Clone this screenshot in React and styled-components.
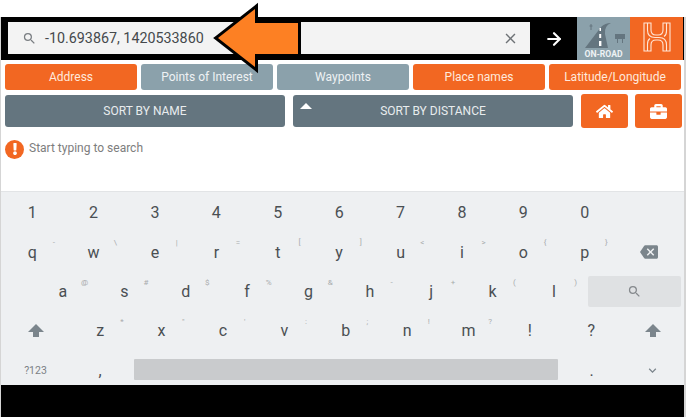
import React from "react";
import styled, { createGlobalStyle } from "styled-components";
import { MdSearch, MdClose, MdBackspace, MdKeyboardArrowDown } from "react-icons/md";
import { FaHome, FaBriefcase, FaExclamation } from "react-icons/fa";
import { ArrowRight } from "lucide-react";

const GlobalStyle = createGlobalStyle`
  html, body {
    margin: 0;
    padding: 0;
    background: #ffffff;
    font-family: Roboto, "Liberation Sans", sans-serif;
  }
`;

const Page = styled.div`
  position: relative;
  width: 688px;
  height: 420px;
  padding-top: 17px;
  box-sizing: border-box;
  overflow: hidden;
`;

const Screen = styled.div`
  width: 686px;
  box-sizing: border-box;
  border-left: 1px solid #d5d5d5;
  border-right: 2px solid #d5d5d5;
`;

const TopBar = styled.div`
  display: flex;
  height: 43px;
  background: #000000;
`;

const SearchBox = styled.div`
  display: flex;
  align-items: center;
  width: 522px;
  height: 32px;
  margin: 5px 0 0 7px;
  background: #f3f3f3;
  box-sizing: border-box;
  padding: 0 11px 0 14px;
`;

const SearchText = styled.span`
  flex: 1;
  margin-left: 8px;
  font-size: 14.3px;
  color: #45494c;
`;

const GoButton = styled.div`
  display: flex;
  align-items: center;
  justify-content: center;
  width: 47px;
  color: #ffffff;
`;

const ModeTile = styled.div`
  width: 53px;
  background: ${(p) => p.$bg};
`;

const Tabs = styled.div`
  display: flex;
  gap: 4px;
  padding: 4px 0 0 4px;
`;

const Tab = styled.div`
  display: flex;
  align-items: center;
  justify-content: center;
  width: 132px;
  height: 26px;
  border-radius: 3px;
  font-size: 12px;
  color: ${(p) => (p.$active ? "#ffe9dc" : "#eef2f4")};
  background: ${(p) => (p.$active ? "#f26722" : "#8ba1ab")};
`;

const SortRow = styled.div`
  display: flex;
  align-items: center;
  padding: 4px 0 0 4px;
`;

const SortButton = styled.div`
  position: relative;
  display: flex;
  align-items: center;
  justify-content: center;
  width: 280px;
  height: 32px;
  margin-right: 8px;
  border-radius: 3px;
  background: #64757f;
  color: #e8ecee;
  font-size: 12px;
`;

const Caret = styled.span`
  position: absolute;
  left: 7px;
  top: 8px;
  width: 0;
  height: 0;
  border-left: 6px solid transparent;
  border-right: 6px solid transparent;
  border-bottom: 6px solid #ffffff;
`;

const IconButton = styled.div`
  display: flex;
  align-items: center;
  justify-content: center;
  width: 47px;
  height: 34px;
  margin-right: ${(p) => p.$gap || 0}px;
  border-radius: 3px;
  background: #f26722;
  color: #ffffff;
  font-size: 17px;
`;

const Notice = styled.div`
  display: flex;
  align-items: center;
  height: 61px;
  padding: 0 0 23px 4px;
  box-sizing: border-box;
  margin-top: 2px;
`;

const NoticeIcon = styled.div`
  display: flex;
  align-items: center;
  justify-content: center;
  width: 19px;
  height: 19px;
  border-radius: 50%;
  background: #f26722;
  color: #ffffff;
  font-size: 12px;
`;

const NoticeText = styled.span`
  margin: 0 0 2px 5px;
  font-size: 12px;
  color: #7d7d7d;
`;

const Keyboard = styled.div`
  height: 194px;
  padding: 1px 0 0 0.5px;
  box-sizing: border-box;
  background: #eef0f2;
  border-top: 1px solid #e2e4e6;
`;

const KeyRow = styled.div`
  display: flex;
  height: ${(p) => p.$height || 39.4}px;
  padding-left: ${(p) => p.$indent || 0}px;
  padding-top: ${(p) => p.$pad || 0}px;
  box-sizing: border-box;
`;

const Key = styled.div`
  position: relative;
  display: flex;
  flex: none;
  align-items: center;
  justify-content: center;
  width: ${(p) => p.$width || 61.4}px;
  font-size: 16px;
  color: ${(p) => p.$color || "#4a4f53"};
`;

const Hint = styled.span`
  position: absolute;
  top: 6px;
  right: 5px;
  width: 8px;
  text-align: center;
  font-size: 8px;
  line-height: 9px;
  color: #a8abad;
`;

const SmallLabel = styled.span`
  font-size: 10.5px;
  color: #7b8085;
`;

const SearchKey = styled.div`
  display: flex;
  align-items: center;
  justify-content: center;
  width: 93px;
  height: 31px;
  margin: 4px 0 0 3px;
  border-radius: 2px;
  background: #dfe1e3;
  color: #85898d;
  font-size: 15px;
`;

const SpaceBar = styled.div`
  width: 424px;
  height: 21px;
  margin: 2px 3px 0;
  border-radius: 1px;
  background: #c9cbcd;
`;

const BottomBar = styled.div`
  height: 32px;
  background: #000000;
`;

const ArrowOverlay = styled.svg`
  position: absolute;
  left: 0;
  top: 0;
  width: 688px;
  height: 100px;
  pointer-events: none;
`;

const tabs = [
  ["Address", true],
  ["Points of Interest", false],
  ["Waypoints", false],
  ["Place names", true],
  ["Latitude/Longitude", true],
];

const numbers = "1234567890".split("");
const row2 = [["q", "-"], ["w", "\\"], ["e", "|"], ["r", "="], ["t", "["], ["y", "]"], ["u", "<"], ["i", ">"], ["o", "{"], ["p", "}"]];
const row3 = [["a", "@"], ["s", "#"], ["d", "$"], ["f", "%"], ["g", "&"], ["h", "-"], ["j", "+"], ["k", "("], ["l", ")"]];
const row4 = [["z", "*"], ["x", '"'], ["c", "'"], ["v", ":"], ["b", ";"], ["n", "!"], ["m", "?"], ["!", ""], ["?", ""]];

const ShiftIcon = () => (
  <svg width="16" height="14" viewBox="0 0 16 14">
    <path d="M8 0 L16 8 H11 V13 H5 V8 H0 Z" fill="#7b858c" />
  </svg>
);

const RoadIcon = () => (
  <svg width="53" height="43" viewBox="0 0 53 43">
    <path d="M8 31 L24 10 Q28 6 34 6 Q27 9 28 17 L31 31 Z" fill="#64757f" />
    <path d="M22.5 11 h1.5 v3 h-1.5z M22.2 17 h2 v4 h-2z M22 24 h2.4 v5 h-2.4z" fill="#ffffff" />
    <path d="M38 17 h10 v5 h-10z M40 22 h1 v4 h-1z M45 22 h1 v4 h-1z" fill="#64757f" />
    <path d="M14 7 v6 M12.5 9 h3" stroke="#64757f" strokeWidth="1" fill="none" />
    <text x="26.5" y="39.5" textAnchor="middle" fontSize="8.6" fontWeight="700" fill="#eef2f4" fontFamily="Roboto, sans-serif">ON-ROAD</text>
  </svg>
);

const HLogo = () => (
  <svg width="53" height="43" viewBox="0 0 53 43">
    <g fill="none" stroke="#ffe6d6" strokeWidth="1.1">
      <path d="M14 6 H21 V13 Q21 18 26 18 H28 Q33 18 33 13 V6 H40 V34 H33 V28 Q33 23 28 23 H26 Q21 23 21 28 V34 H14 Z" />
      <path d="M17.5 6 V13 Q17.5 20.5 25 20.5 H29 Q36.5 20.5 36.5 28 V34" />
      <path d="M17.5 34 V27 Q17.5 23 20 21.5" />
      <path d="M36.5 6 V14 Q36.5 18 34 19.5" />
    </g>
  </svg>
);

const App = () => (
  <Page>
    <GlobalStyle />
    <Screen>
      <TopBar>
        <SearchBox>
          <MdSearch size={15} color="#7a7e82" />
          <SearchText>-10.693867, 1420533860</SearchText>
          <MdClose size={17} color="#6e7276" />
        </SearchBox>
        <GoButton>
          <ArrowRight size={20} strokeWidth={2.6} />
        </GoButton>
        <ModeTile $bg="#8ba1ab">
          <RoadIcon />
        </ModeTile>
        <ModeTile $bg="#f26722">
          <HLogo />
        </ModeTile>
      </TopBar>

      <Tabs>
        {tabs.map(([label, active]) => (
          <Tab key={label} $active={active}>
            {label}
          </Tab>
        ))}
      </Tabs>

      <SortRow>
        <SortButton>SORT BY NAME</SortButton>
        <SortButton>
          <Caret />
          SORT BY DISTANCE
        </SortButton>
        <IconButton $gap={7}>
          <FaHome />
        </IconButton>
        <IconButton>
          <FaBriefcase />
        </IconButton>
      </SortRow>

      <Notice>
        <NoticeIcon>
          <FaExclamation />
        </NoticeIcon>
        <NoticeText>Start typing to search</NoticeText>
      </Notice>

      <Keyboard>
        <KeyRow>
          {numbers.map((n) => (
            <Key key={n}>{n}</Key>
          ))}
        </KeyRow>
        <KeyRow>
          {row2.map(([k, h]) => (
            <Key key={k}>
              {k}
              <Hint>{h}</Hint>
            </Key>
          ))}
          <Key $width={68}>
            <MdBackspace size={18} color="#7b858c" />
          </Key>
        </KeyRow>
        <KeyRow $indent={30.7}>
          {row3.map(([k, h]) => (
            <Key key={k}>
              {k}
              <Hint>{h}</Hint>
            </Key>
          ))}
          <SearchKey>
            <MdSearch />
          </SearchKey>
        </KeyRow>
        <KeyRow>
          <Key $width={68}>
            <ShiftIcon />
          </Key>
          {row4.map(([k, h]) => (
            <Key key={k}>
              {k}
              {h && <Hint>{h}</Hint>}
            </Key>
          ))}
          <Key $width={62}>
            <ShiftIcon />
          </Key>
        </KeyRow>
        <KeyRow $height={33} $pad={6}>
          <Key $width={68}>
            <SmallLabel>?123</SmallLabel>
          </Key>
          <Key>,</Key>
          <SpaceBar />
          <Key>.</Key>
          <Key>
            <MdKeyboardArrowDown size={15} color="#7b858c" />
          </Key>
        </KeyRow>
      </Keyboard>
      <BottomBar />
    </Screen>

    <ArrowOverlay viewBox="0 0 688 100">
      <path
        d="M218 38 L255 9 V23 H298 V54 H255 V67 Z"
        fill="#fd8023"
        stroke="#000000"
        strokeWidth="6"
        strokeLinejoin="miter"
        strokeMiterlimit="4"
        paintOrder="stroke"
      />
    </ArrowOverlay>
  </Page>
);

export default App;
